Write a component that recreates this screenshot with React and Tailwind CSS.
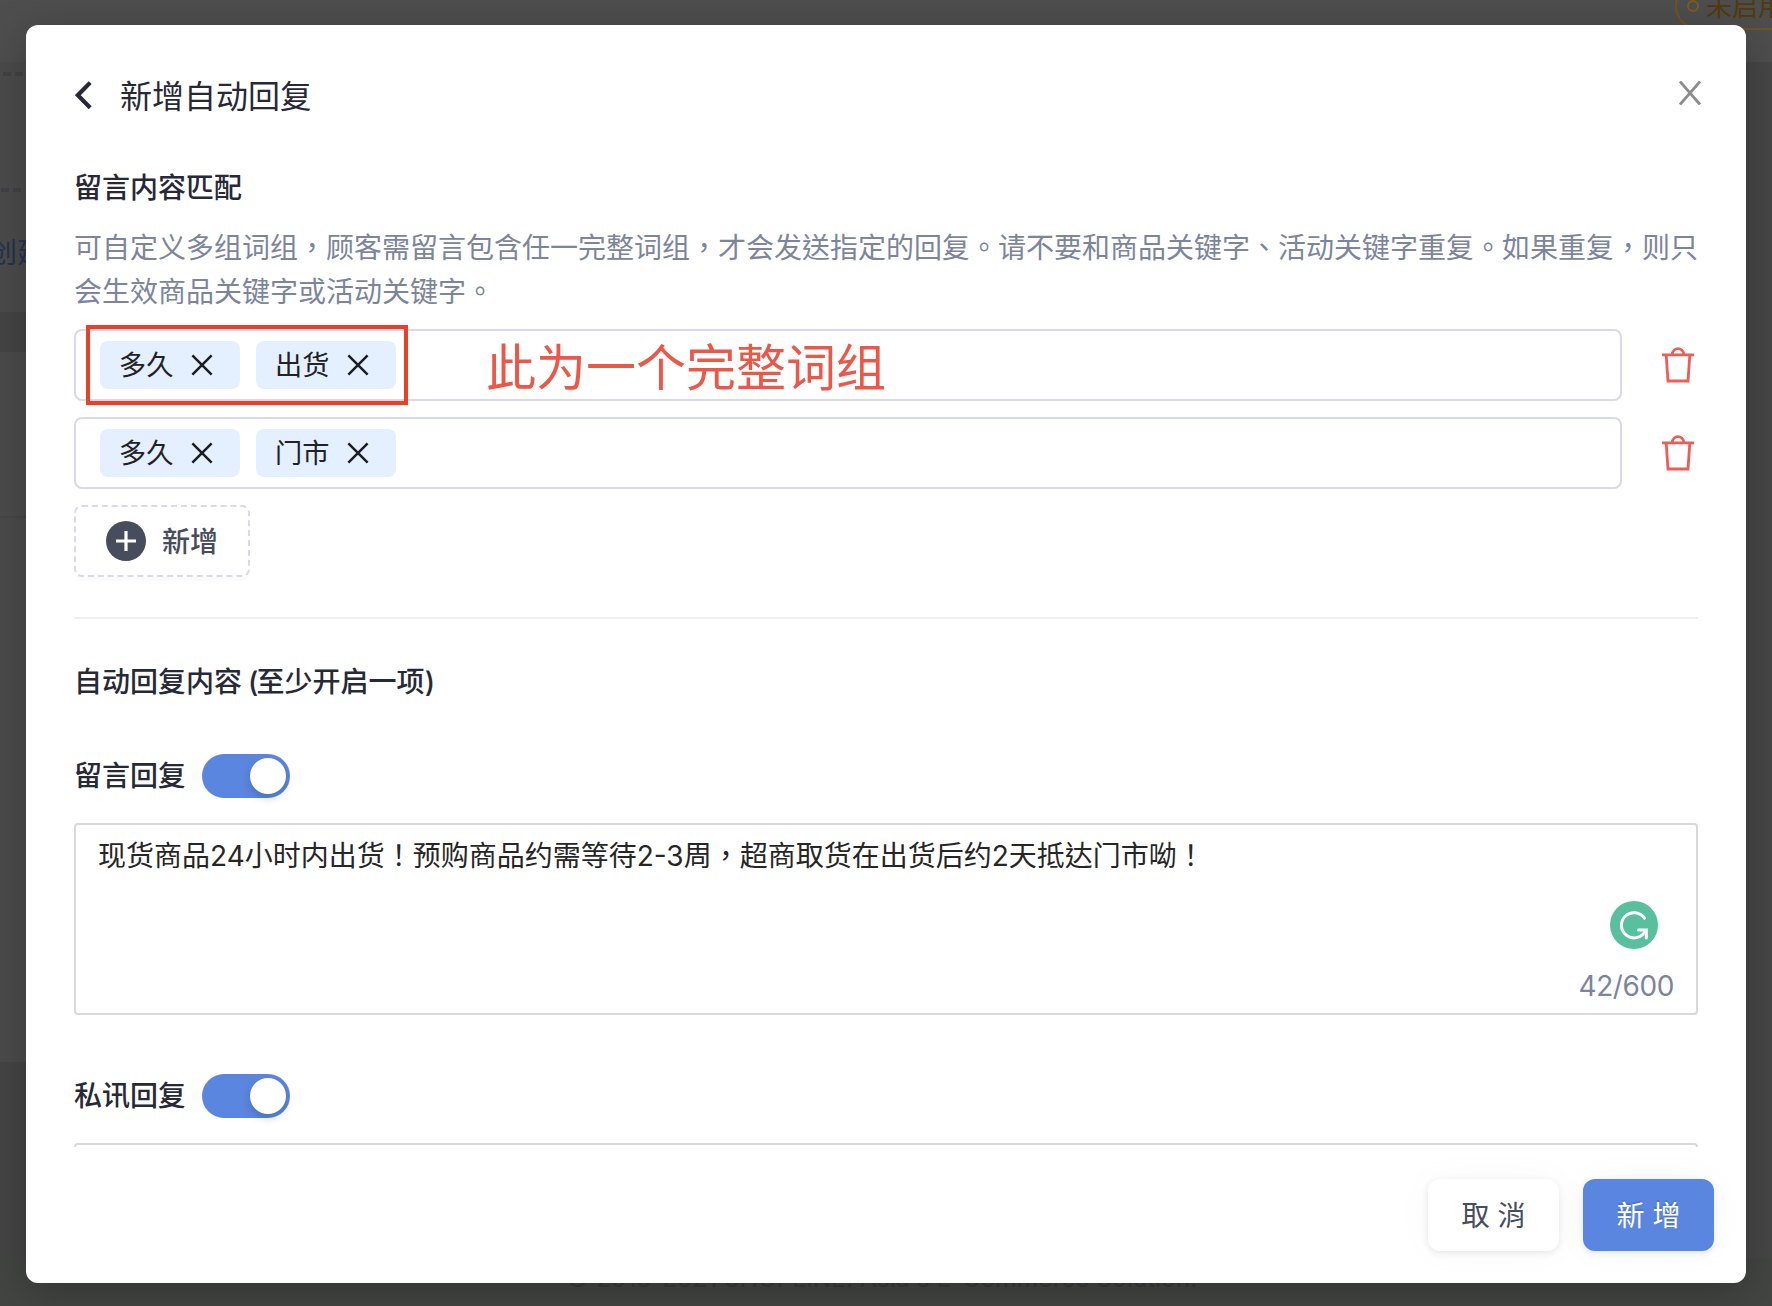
const TC = "font-['Inter','Noto_Sans_CJK_TC',sans-serif]";

function CloseX({ className }) {
  return (
    <svg className={className} viewBox="0 0 24 24" fill="none" stroke="currentColor" strokeWidth="2.7">
      <path d="M1.5 1.5 22.5 22.5M22.5 1.5 1.5 22.5" />
    </svg>
  );
}

function Tag({ children }) {
  return (
    <span className="flex h-12 w-[140px] items-center rounded-lg bg-[#e4f0ff] pl-[19px] text-[27.2px] leading-none text-[#222]">
      <span className="w-[55px] pt-px whitespace-nowrap">{children}</span>
      <CloseX className="ml-[17px] size-[22px] text-[#1b1c1e]" />
    </span>
  );
}

function TrashIcon() {
  return (
    <svg className="h-9 w-8 text-[#f05b56]" viewBox="0 0 32 36" fill="none" stroke="currentColor" strokeWidth="2.8">
      <path d="M0 7.8h32M4.2 8l1.8 26h20l1.8-26M10.2 7.5C10.6 3.8 13 1.6 15.8 1.6s5.8 2 6.2 5.9" />
    </svg>
  );
}

function PhraseRow({ tags, children }) {
  return (
    <div className="flex h-[72px] items-center">
      <div className="relative flex h-full w-[1548px] items-center gap-4 rounded-lg border-2 border-[#d8dae7] pl-6">
        {tags.map((t) => (
          <Tag key={t}>{t}</Tag>
        ))}
        {children}
      </div>
      <div className="ml-10">
        <TrashIcon />
      </div>
    </div>
  );
}

function Toggle() {
  return (
    <span className="flex h-11 w-[88px] items-center justify-end rounded-full bg-[#5b86df] pr-1">
      <span className="size-9 rounded-full bg-white shadow-[0_4px_8px_rgba(0,35,11,0.2)]" />
    </span>
  );
}

function ToggleRow({ label }) {
  return (
    <div className="flex h-11 items-center gap-4">
      <span className="text-[28px] leading-[44px] font-medium text-[#272936]">{label}</span>
      <Toggle />
    </div>
  );
}

function Dashes({ className }) {
  return (
    <div className={`flex gap-1 ${className}`}>
      <span className="h-1 w-2 shrink-0 bg-[#424246]" />
      <span className="h-1 w-2 shrink-0 bg-[#424246]" />
    </div>
  );
}

function Backdrop() {
  return (
    <div className="absolute inset-0 flex flex-col bg-[#4b4b4b]">
      <div className="flex h-[62px] justify-end overflow-hidden bg-[#4e4e4e]">
        <div className="-mt-[18px] -mr-10 flex h-12 w-[137px] items-center gap-[7px] rounded-full border-2 border-[#6f5525] pl-[10px] text-[26px] whitespace-nowrap text-[#533a0c]">
          <span className="size-3 shrink-0 rounded-full border-2 border-[#7a5c26]" />
          未启用
        </div>
      </div>
      <div className="flex min-h-0 flex-1 justify-between">
        <div className="flex w-[26px] flex-col overflow-hidden">
          <Dashes className="mt-[10px] pl-[3px]" />
          <Dashes className="mt-[112px] pl-px" />
          <div className="mt-[41px] -ml-[11px] text-[28px] leading-[40px] whitespace-nowrap text-[#26334f]">创建</div>
          <div className="mt-[39px] h-10 bg-[#444]" />
          <div className="mt-[164px] h-0.5 bg-[#464646]" />
          <div className="mt-[544px] flex-1 bg-[#434443]" />
        </div>
        <div className="w-[26px] bg-[#454645]" />
      </div>
      <div className="h-[48px] bg-[#434543] pr-2 text-center text-[24.5px] leading-[40px] text-[#37393b]">
        © 2013-2021 SHOPLINE. Asia's E-Commerce Solution.
      </div>
    </div>
  );
}

export default function App() {
  return (
    <div lang="zh-Hant" className={`relative h-[1306px] w-[1772px] overflow-hidden ${TC}`}>
      <Backdrop />
      <div className="relative mx-[26px] mt-[25px] flex h-[1258px] flex-col rounded-xl bg-white shadow-[0_8px_40px_rgba(0,0,0,0.25)]">
        <header className="flex h-[140px] items-center justify-between pr-11 pl-[49px]">
          <div className="flex items-center">
            <svg className="size-[30px] text-[#272936]" viewBox="0 0 30 30" fill="none" stroke="currentColor" strokeWidth="4.2">
              <path d="M15.2 2.6 2.8 15.2 15.2 27.8" />
            </svg>
            <h1 className="ml-[15px] pt-[3px] text-[32px] leading-[44px] text-[#272936]">新增自动回复</h1>
          </div>
          <svg className="-mt-1 h-6 w-[23px] text-[#8c8c8c]" viewBox="0 0 23 24" fill="none" stroke="currentColor" strokeWidth="2.8">
            <path d="M1 0.5 21 23.5M21 0.5 1 23.5" />
          </svg>
        </header>

        <main className="h-[982px] overflow-hidden px-12">
          <h2 className="pt-px text-[28px] leading-[44px] font-medium text-[#272936]">留言内容匹配</h2>
          <p className="mt-4 w-[1640px] text-[28px] leading-[44px] text-[#7c859b]">
            可自定义多组词组，顾客需留言包含任一完整词组，才会发送指定的回复。请不要和商品关键字、活动关键字重复。如果重复，则只
            <br />
            会生效商品关键字或活动关键字。
          </p>
          <div className="mt-[15px] flex flex-col gap-4">
            <PhraseRow tags={["多久", "出货"]}>
              <span className="absolute -top-[6px] left-[10px] h-20 w-[322px] border-4 border-[#ea4028]" />
              <span className="-mt-[3px] ml-[74px] font-['Noto_Sans_CJK_SC',sans-serif] text-[50px] leading-none whitespace-nowrap text-[#ed5747]">
                此为一个完整词组
              </span>
            </PhraseRow>
            <PhraseRow tags={["多久", "门市"]} />
            <button className="flex h-[72px] w-[176px] items-center rounded-lg border-2 border-dashed border-[#d8dae7] pl-[30px] text-[28px] font-medium text-[#484d5d] shadow-[0_4px_0_rgba(0,0,0,0.015)]">
              <svg className="size-10" viewBox="0 0 40 40">
                <circle cx="20" cy="20" r="20" fill="#484d5d" />
                <path d="M20 10v20M10 20h20" stroke="#fff" strokeWidth="3.2" />
              </svg>
              <span className="ml-4 pt-px">新增</span>
            </button>
          </div>
          <hr className="mt-10 border-t-2 border-[#f0f0f0]" />
          <h2 className="mt-10 pt-px text-[28px] leading-[44px] font-medium text-[#272936]">
            自动回复内容<span className="tracking-[-1.6px]"> (</span>至少开启一项<span className="tracking-[-1px]">)</span>
          </h2>
          <div className="mt-[50px]">
            <ToggleRow label="留言回复" />
          </div>
          <div className="mt-[25px] flex h-48 flex-col justify-between rounded border-2 border-[#d9d9d9] px-[22px] pt-[9px] pb-[5px]">
            <p className="text-[28px] leading-[44px] text-[#262626]">
              现货商品24小时内出货！预购商品约需等待2-3周，超商取货在出货后约2天抵达门市呦！
            </p>
            <div className="flex flex-col items-end">
              <svg className="mr-4 size-12" viewBox="0 0 48 48" fill="none">
                <circle cx="24" cy="24" r="24" fill="#58c09c" />
                <path d="M34.5 17.2A12.6 12.6 0 1 0 35 30.5" stroke="#fff" strokeWidth="3" strokeLinecap="round" />
                <path d="M28.5 29H36.3V37" stroke="#fff" strokeWidth="3" strokeLinecap="round" />
              </svg>
              <span className="mt-[15px] text-[28px] leading-[44px] tracking-[-0.4px] text-[#7c859b]">42/600</span>
            </div>
          </div>
          <div className="mt-[59px]">
            <ToggleRow label="私讯回复" />
          </div>
          <div className="mt-[25px] h-48 rounded border-2 border-[#d9d9d9]" />
        </main>

        <footer className="mt-8 flex justify-end gap-6 pr-8 text-[28px]">
          <button className="h-[72px] w-[131px] rounded-xl bg-white pt-px pl-2 tracking-[8px] text-[#484d5d] shadow-[0_2px_6px_rgba(30,40,80,0.1),0_0_40px_rgba(0,0,0,0.03)]">
            取消
          </button>
          <button className="h-[72px] w-[131px] rounded-xl bg-[#5b86df] pt-px pl-2 tracking-[8px] text-white shadow-[0_2px_6px_rgba(30,40,80,0.1),0_0_40px_rgba(0,0,0,0.03)] [text-shadow:0_-2px_0_rgba(0,0,0,0.12)]">
            新增
          </button>
        </footer>
      </div>
    </div>
  );
}
